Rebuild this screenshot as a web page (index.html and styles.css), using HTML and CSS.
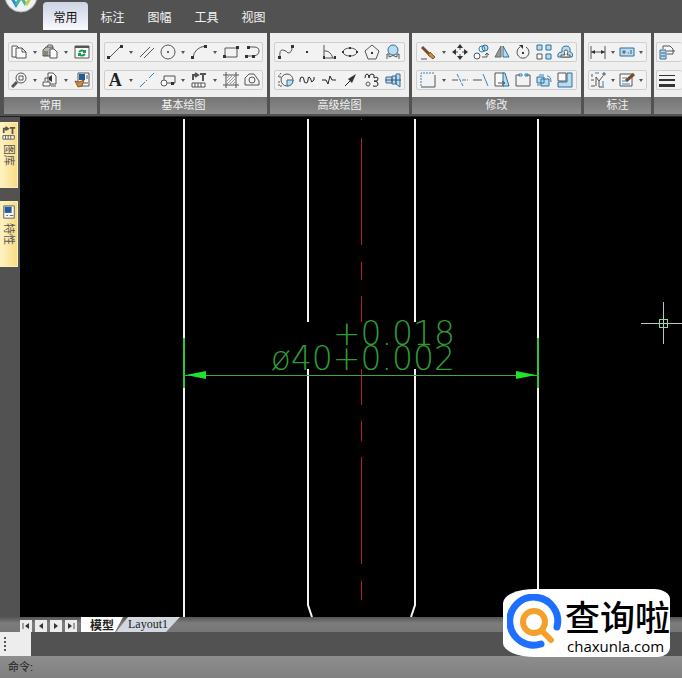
FILE: index.html
```
<!DOCTYPE html>
<html lang="zh-CN">
<head>
  <meta charset="UTF-8">
  <meta name="viewport" content="width=device-width, initial-scale=1">
  <title>CAD</title>
  <link rel="stylesheet" href="styles.css">
</head>
<body>
<header class="topbar">
  <button class="app-button" aria-label="菜单">
    <svg width="34" height="34" viewBox="0 0 34 34">
      <circle cx="17" cy="17" r="16" fill="#eef1f3" stroke="#aeb4b8"/>
      <path d="M6 16l6 10 6-10" fill="none" stroke="#2e8fd0" stroke-width="3"/>
      <path d="M12 26l5-8 5 8" fill="none" stroke="#46b89a" stroke-width="3"/>
      <path d="M22 26l6-10" fill="none" stroke="#c9cf3c" stroke-width="3"/>
    </svg>
  </button>
  <nav class="tabs">
    <button class="tab active">常用</button>
    <button class="tab">标注</button>
    <button class="tab">图幅</button>
    <button class="tab">工具</button>
    <button class="tab">视图</button>
  </nav>
</header>

<div class="ribbon">
  <section class="group g-common">
    <div class="group-body">
      <div class="strip">
        <button class="tool" aria-label="复制"><svg viewBox="0 0 16 16"><path class="w" d="M5 13H1V2h5l2 2"/><path class="w" d="M5 4h6l4 4v6H5z"/><path d="M11 4v4h4"/></svg></button>
        <button class="caret" aria-label="更多"></button>
        <button class="tool" aria-label="粘贴"><svg viewBox="0 0 16 16"><path class="board" d="M1 6l3-3h7v9H1z"/><path d="M5 3l1-2h4l1 2"/><path class="w" d="M8 5h4l3 3v6H8z"/><path d="M3 7v5M5 7v5"/></svg></button>
        <button class="caret" aria-label="更多"></button>
        <button class="tool" aria-label="刷新"><svg viewBox="0 0 16 16"><path class="w" d="M1 2h14v12H1z"/><path d="M1 3h14" stroke-width="2"/><path class="green" d="M5 8q3-3 6 0M11 6v2H9M11 10q-3 3-6 0M5 12v-2h2"/></svg></button>
      </div>
      <div class="strip">
        <button class="tool" aria-label="缩放"><svg viewBox="0 0 16 16"><circle class="w" cx="10" cy="6" r="5"/><path d="M8 4h4v4H8z"/><path d="M6 10l-5 5" stroke-width="3"/></svg></button>
        <button class="caret" aria-label="更多"></button>
        <button class="tool" aria-label="图块"><svg viewBox="0 0 16 16"><path class="w" d="M6 1h5l3 3v8H6z"/><path class="w" d="M1 10h7v4H1z"/><path class="k" d="M7 5l3-2v7L7 8z"/><path d="M3 9V6h4M9 14h5"/></svg></button>
        <button class="caret" aria-label="更多"></button>
        <button class="tool" aria-label="特性匹配"><svg viewBox="0 0 16 16"><path class="w" d="M4 1h11v13H4z"/><path class="navy" d="M5 2h6v6H5z"/><path d="M12 4h2M12 6h2M9 11h5"/><path class="orange" d="M1 9l4 1 5-2-2 6-4 1z"/></svg></button>
      </div>
    </div>
    <h2>常用</h2>
  </section>

  <section class="group g-draw">
    <div class="group-body">
      <div class="strip">
        <button class="tool" aria-label="直线"><svg viewBox="0 0 16 16"><path d="M2 14L14 2"/><path class="k" d="M0 12h3v3H0zM13 1h3v3h-3z"/></svg></button>
        <button class="caret" aria-label="更多"></button>
        <button class="tool" aria-label="平行线"><svg viewBox="0 0 16 16"><path d="M1 13L11 3M5 14L15 4"/></svg></button>
        <button class="tool" aria-label="圆"><svg viewBox="0 0 16 16"><circle cx="8" cy="8" r="7"/><circle class="k" cx="8" cy="8" r="1"/></svg></button>
        <button class="caret" aria-label="更多"></button>
        <button class="tool" aria-label="圆弧"><svg viewBox="0 0 16 16"><path d="M2 14Q3 4 14 2"/><path class="k" d="M0 12h3v3H0zM13 1h3v3h-3z"/></svg></button>
        <button class="caret" aria-label="更多"></button>
        <button class="tool" aria-label="矩形"><svg viewBox="0 0 16 16"><path d="M2 4h12v9H2z"/><path class="k" d="M0 11h3v3H0zM13 2h3v3h-3z"/></svg></button>
        <button class="tool" aria-label="多段线"><svg viewBox="0 0 16 16"><path d="M4 3h6q5 0 5 4t-5 5H3"/><path class="k" d="M3 2h3v3H3zM1 11h3v3H1zM8 11h3v3H8z"/></svg></button>
      </div>
      <div class="strip">
        <button class="tool letter" aria-label="文字">A</button>
        <button class="caret" aria-label="更多"></button>
        <button class="tool" aria-label="中心线"><svg viewBox="0 0 16 16"><path class="blue" d="M1 15L6 10M7 9l1-1M10 6l5-5"/></svg></button>
        <button class="tool" aria-label="局部放大"><svg viewBox="0 0 16 16"><path d="M4 4h11v7H4z"/><circle class="w" cx="4" cy="11" r="3"/><path class="k" d="M11 10h3v3h-3z"/></svg></button>
        <button class="caret" aria-label="更多"></button>
        <button class="tool" aria-label="图库"><svg viewBox="0 0 16 16"><path d="M2 8V3h4M4 1l3 2-3 2M9 2h6M12 2v7" stroke-width="2"/><path class="w" d="M1 11h13v4H1z"/><path d="M4 11v4M7 11v4M10 11v4"/></svg></button>
        <button class="caret" aria-label="更多"></button>
        <button class="tool" aria-label="剖面线"><svg viewBox="0 0 16 16"><path d="M3 0v16M13 0v16M0 3h16M0 13h16"/><path class="thin" d="M4 6l2-2M4 9l5-5M4 12l8-8M7 12l5-5M10 12l2-2"/></svg></button>
        <button class="tool" aria-label="填充"><svg viewBox="0 0 16 16"><path d="M1 13V6l4-4h5l5 7v4z"/><circle cx="8" cy="8" r="3"/></svg></button>
      </div>
    </div>
    <h2>基本绘图</h2>
  </section>

  <section class="group g-adv">
    <div class="group-body">
      <div class="strip">
        <button class="tool" aria-label="样条"><svg viewBox="0 0 16 16"><path d="M2 14Q1 5 5 6t5 3q4 0 4-6"/><path class="k" d="M0 12h3v3H0zM13 1h3v3h-3z"/></svg></button>
        <button class="tool" aria-label="点"><svg viewBox="0 0 16 16"><path class="k" d="M7 7h2v2H7z"/></svg></button>
        <button class="tool" aria-label="公式曲线"><svg viewBox="0 0 16 16"><path d="M3 1v13h12M3 7q6-1 9 7"/><path class="k" d="M2 12h2v3H2zM13 12h2v3h-2z"/></svg></button>
        <button class="tool" aria-label="椭圆"><svg viewBox="0 0 16 16"><ellipse cx="8" cy="8" rx="7" ry="4"/><path class="k" d="M7 3h2v2H7zM0 7h2v2H0zM14 7h2v2h-2zM7 11h2v2H7z"/></svg></button>
        <button class="tool" aria-label="正多边形"><svg viewBox="0 0 16 16"><path d="M8 1l7 6-3 8H4L1 7z"/><path class="k" d="M7 8h2v2H7z"/></svg></button>
        <button class="tool" aria-label="圆弧拟合"><svg viewBox="0 0 16 16"><circle class="lb" cx="8" cy="6" r="5"/><path d="M2 15v-5h2v3q4-3 8 0v-3h2v5"/></svg></button>
      </div>
      <div class="strip">
        <button class="tool" aria-label="局部视图"><svg viewBox="0 0 16 16"><circle cx="9" cy="8" r="6"/><path class="lb" d="M9 8h6q0 6-6 6z"/><path d="M3 1L0 5h4M1 9v5h4" stroke-dasharray="2 1"/></svg></button>
        <button class="tool" aria-label="波浪线"><svg viewBox="0 0 16 16"><path class="bold" d="M1 10V8q0-3 2-3t2 3 2 3 2-3 1-3 2 3 1 2 2-2V5"/></svg></button>
        <button class="tool" aria-label="双折线"><svg viewBox="0 0 16 16"><path class="bold" d="M1 8h4l2 4 2-8 2 4h4"/></svg></button>
        <button class="tool" aria-label="箭头"><svg viewBox="0 0 16 16"><path class="bold" d="M3 14l7-7"/><path class="k" d="M14 2l-8 5 4 4z"/></svg></button>
        <button class="tool" aria-label="齿轮"><svg viewBox="0 0 16 16"><path class="bold" d="M1 6q0-4 2-4t2 4q0-4 3-4t2 4q4-2 4 1t-4 2q4 0 4 3t-5 2"/><circle cx="4" cy="12" r="2"/></svg></button>
        <button class="tool" aria-label="轴"><svg viewBox="0 0 16 16"><path class="lb" d="M1 5h6v6H1zM7 4h4v8H7zM11 2h4v13l-4-3z"/><path d="M0 8h16"/></svg></button>
      </div>
    </div>
    <h2>高级绘图</h2>
  </section>

  <section class="group g-modify">
    <div class="group-body">
      <div class="strip">
        <button class="tool" aria-label="删除"><svg viewBox="0 0 16 16"><path class="brown" d="M2 3l9 9"/><path class="orange" d="M10 8l5 5-2 2-5-4z"/><path d="M1 15h6"/></svg></button>
        <button class="caret" aria-label="更多"></button>
        <button class="tool" aria-label="平移"><svg viewBox="0 0 16 16"><path d="M8 2v4M8 10v4M2 8h4M10 8h4"/><path class="k" d="M8 0l3 4H5zM8 16l3-4H5zM0 8l4-3v6zM16 8l-4-3v6z"/></svg></button>
        <button class="tool" aria-label="平移复制"><svg viewBox="0 0 16 16"><circle class="w" cx="4" cy="12" r="3"/><circle class="lb" cx="12" cy="4" r="3"/><circle class="blue" cx="9" cy="5" r="3"/><path d="M9 13h5V9M12 11l2-2 2 2"/></svg></button>
        <button class="tool" aria-label="镜像"><svg viewBox="0 0 16 16"><path class="half" d="M7 2v11H1z"/><path class="lb" d="M9 2v11h6z"/></svg></button>
        <button class="tool" aria-label="旋转"><svg viewBox="0 0 16 16"><path d="M5 3a6 6 0 1 0 6 0"/><path class="k" d="M4 1h4v4zM7 8h2v2H7z"/></svg></button>
        <button class="tool" aria-label="阵列"><svg viewBox="0 0 16 16"><path class="lb" d="M1 1h5v5H1zM10 1h5v5h-5zM10 10h5v5h-5z"/><path class="w" d="M1 10h5v5H1z"/></svg></button>
        <button class="tool" aria-label="偏移"><svg viewBox="0 0 16 16"><path class="lb" d="M1 13q-1-5 4-5-1-6 4-6t4 6q4 1 2 5z"/><path class="w" d="M4 13v-2h4q-2-5 1-5t1 5h3v2z"/></svg></button>
      </div>
      <div class="strip">
        <button class="tool" aria-label="拉伸"><svg viewBox="0 0 16 16"><path class="blue" d="M1 14V1h14" stroke-dasharray="2 1"/><path d="M1 15h14V3"/></svg></button>
        <button class="caret" aria-label="更多"></button>
        <button class="tool" aria-label="裁剪"><svg viewBox="0 0 16 16"><path class="blue" d="M5 2l6 12M10 8h6" stroke-dasharray="4 1"/><path d="M0 8h6"/></svg></button>
        <button class="tool" aria-label="延伸"><svg viewBox="0 0 16 16"><path d="M0 8h9"/><path class="blue" d="M10 2l5 12"/></svg></button>
        <button class="tool" aria-label="缩放"><svg viewBox="0 0 16 16"><path class="w" d="M1 1h9v13H1z"/><path class="lb" d="M9 1h2l4 13H9z"/><path d="M4 11h6M8 9l3 2-3 2"/></svg></button>
        <button class="tool" aria-label="打断"><svg viewBox="0 0 16 16"><path d="M5 3H1v11h14V3h-4"/><path class="blue" d="M4 2h3v2H4zM10 2h3v2h-3z"/></svg></button>
        <button class="tool" aria-label="分解"><svg viewBox="0 0 16 16"><path class="lb" d="M1 5h7v6H1zM5 7h8v7H5z"/><path class="blue" d="M11 4q4 0 4 6M3 3h5M1 13h3"/></svg></button>
        <button class="tool" aria-label="圆角"><svg viewBox="0 0 16 16"><path class="lb" d="M1 15v-5h9V1h5v14z"/><path class="w" d="M1 1h8v8H1z"/></svg></button>
      </div>
    </div>
    <h2>修改</h2>
  </section>

  <section class="group g-dim">
    <div class="group-body">
      <div class="strip">
        <button class="tool" aria-label="尺寸标注"><svg viewBox="0 0 16 16"><path d="M1 2v13M15 2v13M1 8h14"/><path class="k" d="M1 8l4-2v4zM15 8l-4-2v4z"/></svg></button>
        <button class="caret" aria-label="更多"></button>
        <button class="tool" aria-label="公差"><svg viewBox="0 0 16 16"><path class="lb" d="M1 4h14v8H1z"/><path d="M3 8h4M5 6v4M9 9h1M12 6v4"/></svg></button>
        <button class="caret" aria-label="更多"></button>
      </div>
      <div class="strip">
        <button class="tool" aria-label="坐标标注"><svg viewBox="0 0 16 16"><path d="M2 2v3M1 8h3M1 14h4M6 14V5l3 4 4-5M9 9v6h5M13 1h2v2h-2z"/><path class="blue" d="M5 1h4M13 9v5"/></svg></button>
        <button class="caret" aria-label="更多"></button>
        <button class="tool" aria-label="技术要求"><svg viewBox="0 0 16 16"><path class="w" d="M1 2h12v12H1z"/><path class="blue" d="M3 6h5M3 9h4M3 12h8"/><path class="brown" d="M15 2L7 9"/></svg></button>
        <button class="caret" aria-label="更多"></button>
      </div>
    </div>
    <h2>标注</h2>
  </section>

  <section class="group g-prop">
    <div class="group-body">
      <div class="strip">
        <button class="tool" aria-label="图层"><svg viewBox="0 0 16 16"><path class="w" d="M4 5V2h7l3 3v5H8M8 7h8"/><path class="lb" d="M1 6h6v9H1z"/><path d="M2 9h4M2 12h4"/></svg></button>
      </div>
      <div class="strip">
        <button class="tool" aria-label="线宽"><svg viewBox="0 0 16 16"><path class="k" d="M0 3h16v1H0zM0 7h16v2H0zM0 12h16v3H0z"/></svg></button>
      </div>
    </div>
    <h2></h2>
  </section>
</div>

<main class="workspace">
  <aside class="rail">
    <button class="dock">
      <svg width="14" height="16" viewBox="0 0 16 16"><path d="M2 8V3h4M4 1l3 2-3 2M9 2h6M12 2v7" stroke-width="2"/><path class="w" d="M1 11h13v4H1z"/><path d="M4 11v4M7 11v4M10 11v4"/></svg>
      <span>图库</span>
    </button>
    <button class="dock">
      <svg width="14" height="16" viewBox="0 0 16 16"><path class="w" d="M2 1h12v14H2z"/><path class="navy" d="M3 2h8v7H3z"/><path d="M5 12h2M9 12h4"/></svg>
      <span>特性</span>
    </button>
  </aside>
  <div class="canvas">
    <svg class="drawing" viewBox="0 0 662 500" preserveAspectRatio="xMidYMid slice">
      <!-- 轮廓线 -->
      <path class="outline" d="M164 2v498M518 2v498"/>
      <path class="outline" d="M288 2v203M288 252v236l4 12M395 2v203M395 252v236l-4 12"/>
      <!-- 中心线 -->
      <path class="center" d="M341 2v1M341 21v107M341 145v18M341 179v26M341 252v36M341 304v20M341 340v107M341 464v19"/>
      <!-- 尺寸 -->
      <path class="dim" d="M164 221v50M518 221v50"/>
      <path class="dim line" d="M164 258h354"/>
      <path class="arrow" d="M166 258l20-4v8zM516 258l-20-4v8z"/>
      <text class="dim-text" x="435" y="228">+0.018</text>
      <text class="dim-text" x="435" y="253">ø40+0.002</text>
      <!-- 光标 -->
      <path class="cursor" d="M621 206h41M643 185v42"/>
      <path class="pick" d="M639 202h8v8h-8z"/>
    </svg>
  </div>
</main>

<div class="layouts">
  <div class="pager">
    <button aria-label="首页"><svg viewBox="0 0 12 12"><path d="M3 3v6" /><path class="k" d="M9 3v6L5 6z"/></svg></button>
    <button aria-label="上一页"><svg viewBox="0 0 12 12"><path class="k" d="M8 3v6L4 6z"/></svg></button>
    <button aria-label="下一页"><svg viewBox="0 0 12 12"><path class="k" d="M4 3v6l4-3z"/></svg></button>
    <button aria-label="末页"><svg viewBox="0 0 12 12"><path d="M9 3v6" /><path class="k" d="M3 3v6l4-3z"/></svg></button>
  </div>
  <button class="sheet current">模型</button>
  <button class="sheet">Layout1</button>
</div>
<div class="toolrow"><div class="grip"></div></div>
<footer class="command">命令:</footer>

<div class="watermark">
  <svg width="58" height="58" viewBox="0 0 58 58">
    <path d="M34 50A24 24 0 1 1 50 33" fill="none" stroke="#1f6fff" stroke-width="7" stroke-linecap="round"/>
    <circle cx="27" cy="28" r="11" fill="none" stroke="#f5a02a" stroke-width="6"/>
    <path d="M35 37l9 9" stroke="#f5a02a" stroke-width="6" stroke-linecap="round"/>
  </svg>
  <div class="mark-text">
    <strong>查询啦</strong>
    <span>chaxunla.com</span>
  </div>
</div>
</body>
</html>
```
FILE: styles.css
```
* {
  box-sizing: border-box;
}

body {
  margin: 0;
  min-height: 100vh;
  display: flex;
  flex-direction: column;
  position: relative;
  overflow: hidden;
  background: #525252;
  font-family: "Liberation Sans", "Noto Sans CJK SC", sans-serif;
  font-size: 12px;
  color: #222;
}

button {
  border: none;
  padding: 0;
  background: none;
  font: inherit;
  color: inherit;
}

/* 图标 */
:where(.tool, .dock, .pager) path,
:where(.tool, .dock, .pager) circle,
:where(.tool, .dock, .pager) ellipse {
  fill: none;
  stroke: #555;
}

svg .w { fill: #fafafa; }
svg .k { fill: #333; stroke: none; }
svg .lb { fill: #b9dcf3; stroke: #2f7098; }
svg .blue { stroke: #3585bb; }
svg .green { stroke: #1c9a50; stroke-width: 2; }
svg .navy { fill: #24599b; stroke: none; }
svg .orange { fill: #c98a45; stroke: #8a5a28; }
svg .brown { stroke: #7a4a2c; stroke-width: 3; }
svg .bold { stroke: #222; }
svg .thin { stroke: #999; }
svg .board { fill: #b9b6ac; }
svg .half { fill: #999; stroke: #666; }

/* 顶部标签 */
.topbar {
  display: flex;
  height: 30px;
  background: #525252;
}

.app-button {
  width: 41px;
  height: 13px;
  margin-right: 2px;
  display: flex;
  align-items: flex-end;
  justify-content: center;
}

.app-button svg {
  flex: none;
}

.tabs {
  display: flex;
  gap: 2px;
  padding-top: 2px;
}

.tab {
  width: 45px;
  height: 28px;
  color: #f2f2f2;
  font-size: 12px;
}

.tab.active {
  color: #111;
  background: linear-gradient(#cdd3e2, #e6e9f3 60%, #fafbff);
  border-radius: 4px 4px 0 0;
}

/* 功能区 */
.ribbon {
  display: flex;
  gap: 3px;
  height: 87px;
  padding: 3px 0 2px 4px;
  overflow: hidden;
  border-bottom: 1px solid #222;
}

.group {
  flex: none;
  display: flex;
  flex-direction: column;
  background: #efefef;
}

.g-common { width: 93px; }
.g-draw { width: 167px; }
.g-adv { width: 139px; }
.g-modify { width: 169px; }
.g-dim { width: 67px; }
.g-prop { flex: 1 0 28px; }
.g-prop .group-body { padding: 9px 0 0 2px; }

.group-body {
  flex: 1;
  display: flex;
  flex-direction: column;
  gap: 8px;
  padding: 9px 4px 0;
}

.group h2 {
  margin: 0;
  height: 17px;
  background: linear-gradient(#747474, #8b8b8b);
  color: #f2f2f2;
  font-size: 11px;
  font-weight: normal;
  line-height: 17px;
  text-align: center;
}

.strip {
  display: flex;
  height: 20px;
  border: 1px solid #cfcfcf;
  border-radius: 2px;
  background: #f2f2f2;
}

.g-prop .strip {
  border-right: none;
}

.tool {
  flex: 1 1 21px;
  min-width: 0;
  display: flex;
  align-items: center;
  justify-content: center;
}

.g-prop .tool {
  flex: none;
  width: 20px;
}

.tool svg {
  flex: none;
  width: 16px;
  height: 16px;
}

.letter {
  font: bold 18px/18px "Liberation Serif", serif;
}

.caret {
  flex: 0 1 11px;
  display: flex;
  align-items: center;
  justify-content: center;
}

.caret::before {
  content: "";
  border: 2px solid transparent;
  border-top: 3px solid #555;
  border-bottom: 0;
}

/* 绘图区 */
.workspace {
  flex: 1;
  display: flex;
  min-height: 0;
}

.rail {
  width: 20px;
  padding-top: 5px;
  display: flex;
  flex-direction: column;
  gap: 13px;
  background: #525252;
}

.dock {
  width: 18px;
  height: 66px;
  padding: 2px 0;
  display: flex;
  flex-direction: column;
  align-items: center;
  gap: 3px;
  background: linear-gradient(90deg, #fff3c2, #f8dc85);
  border: 1px solid #fff0b8;
}

.dock span {
  writing-mode: vertical-rl;
  text-orientation: sideways;
  font-size: 11px;
  line-height: 14px;
  color: #555;
}

.canvas {
  flex: 1;
  min-width: 0;
  position: relative;
  background: #000;
}

.drawing {
  position: absolute;
  width: 100%;
  height: 100%;
  fill: none;
}

.drawing .outline { stroke: #f4f4f4; stroke-width: 2; }
.drawing .dim { stroke: #2fc53a; stroke-width: 2; }
.drawing .dim.line,
.drawing .center,
.drawing .cursor,
.drawing .pick {
  stroke-width: 1;
  shape-rendering: crispEdges;
}
.drawing .dim.line { stroke: #43a348; }
.drawing .center { stroke: #b81a30; }
.drawing .arrow { fill: #1fe22a; }
.drawing .cursor { stroke: #c4c4c4; }
.drawing .pick { stroke: #7fdfa4; }

.dim-text {
  font-family: "DejaVu Sans Light", "DejaVu Sans", sans-serif;
  font-size: 33px;
  font-weight: 200;
  fill: #2f9a35;
  text-anchor: end;
}

/* 底部 */
.layouts {
  display: flex;
  height: 15px;
  padding-left: 20px;
  background: linear-gradient(#555, #7c7c7c 40%, #777);
}

.pager {
  display: flex;
  gap: 3px;
  width: 61px;
  padding-top: 3px;
}

.pager button {
  width: 12px;
  height: 12px;
  background: #ececec;
}

.pager svg {
  display: block;
}

.sheet {
  width: 64px;
  margin-left: -7px;
  background: #d3d8e0;
  clip-path: polygon(12px 0, 100% 0, calc(100% - 14px) 100%, 0 100%);
  font: 12px/15px "Liberation Serif", serif;
}

.sheet.current {
  width: 42px;
  margin-left: 0;
  background: #fff;
  clip-path: polygon(0 0, 100% 0, calc(100% - 8px) 100%, 0 100%);
  font: bold 12px/15px "Noto Sans CJK SC", sans-serif;
}

.toolrow {
  height: 24px;
}

.grip {
  width: 31px;
  height: 24px;
  padding: 5px 0 0 4px;
  background: #ededed;
}

.grip::before {
  content: "";
  display: block;
  height: 14px;
  border-left: 2px dotted #555;
}

.command {
  height: 22px;
  padding-left: 8px;
  background: linear-gradient(#8e8e8e, #7f7f7f);
  font-size: 11px;
  line-height: 22px;
}

/* 水印 */
.watermark {
  position: absolute;
  right: 12px;
  bottom: 21px;
  width: 167px;
  height: 68px;
  padding: 5px 0 0 4px;
  display: flex;
  background: #fff;
  border-radius: 32px 16px 12px 32px / 14px 10px 10px 14px;
  color: #000;
}

.watermark svg {
  flex: none;
}

.mark-text {
  display: flex;
  flex-direction: column;
  white-space: nowrap;
}

.mark-text strong {
  font: 500 35px/44px "Noto Sans CJK SC", sans-serif;
}

.mark-text span {
  padding-left: 2px;
  font: 500 15px/16px "Open Sans", sans-serif;
}
```
